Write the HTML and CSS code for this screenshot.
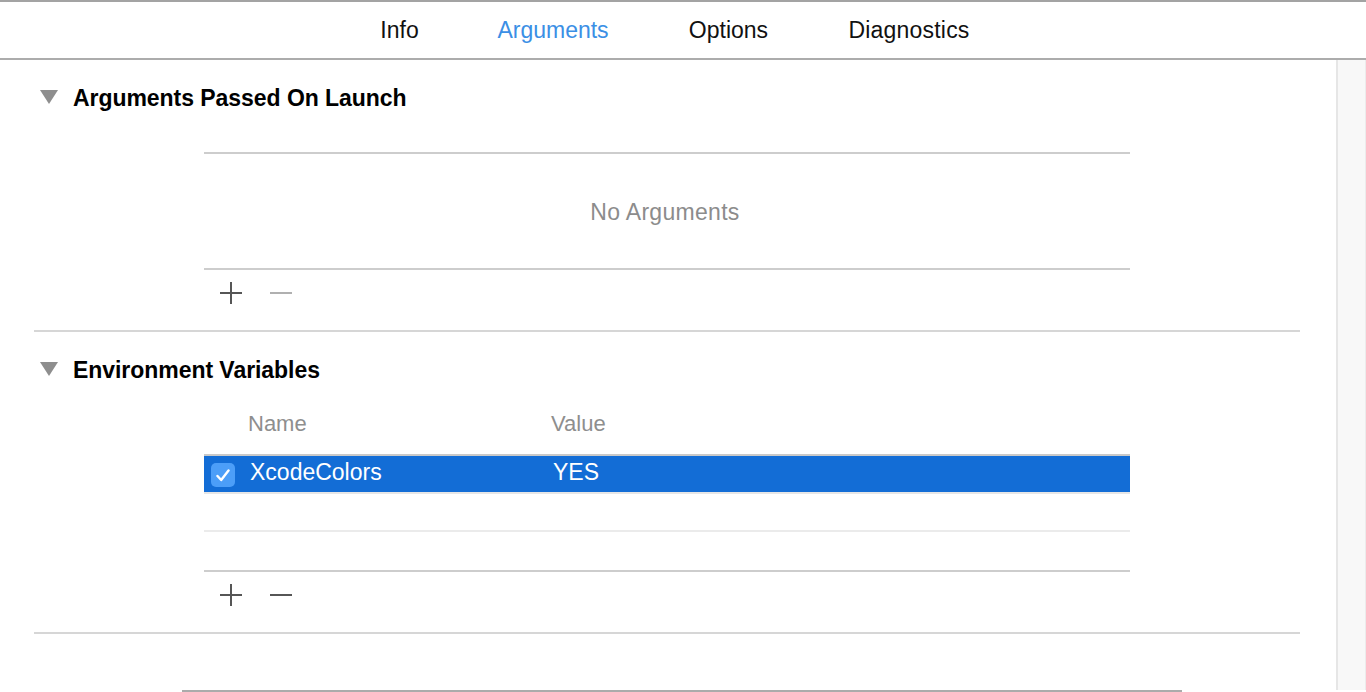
FILE: index.html
```html
<!DOCTYPE html>
<html lang="en">
<head>
<meta charset="utf-8">
<title>Scheme Editor - Arguments</title>
<link rel="stylesheet" href="styles.css">
</head>
<body>
<div class="window">
  <header class="tabbar">
    <nav class="tabs">
      <span class="tab tab-info">Info</span>
      <span class="tab tab-args active">Arguments</span>
      <span class="tab tab-options">Options</span>
      <span class="tab tab-diag">Diagnostics</span>
    </nav>
  </header>

  <div class="scroll-area">
    <main class="content">
      <section class="section">
        <div class="section-head">
          <svg class="disclosure" width="18" height="14" viewBox="0 0 18 14"><polygon points="0,0 18,0 9,14" fill="#8e8e8e"/></svg>
          <h2 class="section-title">Arguments Passed On Launch</h2>
        </div>
        <div class="table">
          <div class="empty-body">
            <span class="empty-text">No Arguments</span>
          </div>
          <div class="buttons">
            <svg class="btn" width="22" height="22" viewBox="0 0 22 22"><rect x="0" y="10" width="22" height="2" fill="#565656"/><rect x="10" y="0" width="2" height="22" fill="#565656"/></svg>
            <svg class="btn" width="22" height="22" viewBox="0 0 22 22"><rect x="0" y="10" width="22" height="2" fill="#b0b0b0"/></svg>
          </div>
        </div>
      </section>

      <section class="section">
        <div class="section-head">
          <svg class="disclosure" width="18" height="14" viewBox="0 0 18 14"><polygon points="0,0 18,0 9,14" fill="#8e8e8e"/></svg>
          <h2 class="section-title">Environment Variables</h2>
        </div>
        <div class="table env">
          <div class="col-head">
            <span class="cell-check"></span>
            <span class="cell-name">Name</span>
            <span class="cell-value">Value</span>
          </div>
          <div class="rows">
            <div class="row selected">
              <span class="cell-check">
                <span class="checkbox">
                  <svg width="14" height="13" viewBox="0 0 14 13"><path d="M1.5 7 L5.2 11 L12.5 1.5" fill="none" stroke="#fff" stroke-width="2.4" stroke-linecap="round" stroke-linejoin="round"/></svg>
                </span>
              </span>
              <span class="cell-name">XcodeColors</span>
              <span class="cell-value">YES</span>
            </div>
            <div class="row blank"></div>
            <div class="rows-fill"></div>
          </div>
          <div class="buttons">
            <svg class="btn" width="22" height="22" viewBox="0 0 22 22"><rect x="0" y="10" width="22" height="2" fill="#565656"/><rect x="10" y="0" width="2" height="22" fill="#565656"/></svg>
            <svg class="btn" width="22" height="22" viewBox="0 0 22 22"><rect x="0" y="10" width="22" height="2" fill="#565656"/></svg>
          </div>
        </div>
      </section>
    </main>
    <aside class="scrollbar"></aside>
  </div>

  <footer class="bottom">
    <div class="bottom-line"></div>
  </footer>
</div>
</body>
</html>
```

FILE: styles.css
```css
* {
  box-sizing: border-box;
}

html, body {
  margin: 0;
  padding: 0;
  background: #ffffff;
}

body {
  font-family: "Liberation Sans", Arial, "Helvetica Neue", sans-serif;
  color: #000;
  width: 1366px;
  height: 692px;
  overflow: hidden;
}

.window {
  display: flex;
  flex-direction: column;
  height: 692px;
}

/* ---------- tab bar ---------- */
.tabbar {
  height: 60px;
  border-top: 2px solid #a3a3a3;
  border-bottom: 2px solid #acacac;
  display: flex;
  align-items: center;
  flex: none;
}

.tabs {
  display: flex;
  align-items: center;
  gap: 78px;
  padding-left: 380px;
}

.tab {
  font-size: 23px;
  line-height: 28px;
  white-space: nowrap;
  text-align: center;
  color: #111;
  display: flex;
  justify-content: center;
}

.tab-info { width: 39px; }
.tab-args { width: 112px; }
.tab-options { width: 81px; margin-left: 1px; }
.tab-diag { width: 122px; margin-left: 1px; letter-spacing: 0.2px; }

.tab.active {
  color: #3b8fe5;
}

/* ---------- scroll area ---------- */
.scroll-area {
  display: flex;
  height: 630px;
  flex: none;
}

.content {
  width: 1336px;
  flex: none;
  padding-left: 34px;
}

.scrollbar {
  width: 30px;
  flex: none;
  background: #f8f8f8;
  border-left: 2px solid #e6e6e6;
  border-right: 1px solid #ececec;
}

/* ---------- sections ---------- */
.section {
  width: 1266px;
  border-bottom: 2px solid #d6d6d6;
}

.section-head {
  display: flex;
  align-items: center;
  height: 36px;
  margin-top: 20px;
}

.disclosure {
  margin-left: 6px;
  margin-top: -2px;
  flex: none;
}

.section-title {
  margin: 0 0 0 15px;
  font-size: 23px;
  font-weight: bold;
  line-height: 36px;
  letter-spacing: -0.05px;
}

.table {
  margin-left: 170px;
  width: 926px;
  margin-top: 36px;
}

.empty-body {
  border-top: 2px solid #cdcdcd;
  border-bottom: 2px solid #cdcdcd;
  height: 118px;
  display: flex;
  align-items: center;
  justify-content: center;
}

.empty-text {
  font-size: 23px;
  color: #8c8c8c;
  margin-top: 2px;
  margin-right: 4px;
  letter-spacing: 0.3px;
}

.buttons {
  height: 46px;
  margin-bottom: 14px;
  display: flex;
  align-items: center;
  gap: 28px;
  padding-left: 16px;
}

.btn {
  display: block;
  flex: none;
}

/* ---------- env table ---------- */
.table.env {
  margin-top: 18px;
}

.col-head {
  display: flex;
  height: 48px;
  font-size: 22px;
  line-height: 36px;
  color: #8e8e8e;
}

.cell-check {
  width: 44px;
  flex: none;
  display: flex;
  align-items: center;
  padding-left: 7px;
}

.cell-name {
  width: 303px;
  flex: none;
}

.cell-value {
  flex: 1;
}

.rows {
  border-top: 2px solid #c9c9c9;
  border-bottom: 2px solid #cdcdcd;
}

.row {
  display: flex;
  align-items: center;
  height: 38px;
  font-size: 23px;
  border-bottom: 2px solid #e8e8e8;
}

.row.selected {
  background: #136dd6;
  color: #fff;
  border-bottom-color: #e6e6e6;
  background-clip: padding-box;
}

.row.selected .cell-name {
  margin-top: -3px;
  padding-left: 2px;
}

.row.selected .cell-value {
  margin-top: -3px;
  padding-left: 2px;
}

.checkbox {
  width: 24px;
  height: 24px;
  border-radius: 5px;
  background: #4c9ef8;
  display: flex;
  align-items: center;
  justify-content: center;
  margin-top: 1px;
}

.checkbox svg {
  display: block;
  margin-top: 1px;
}

.row.blank {
  height: 38px;
  border-bottom-color: #ebebeb;
}

.rows-fill {
  height: 38px;
}

/* ---------- bottom ---------- */
.bottom {
  height: 2px;
  flex: none;
  padding-left: 182px;
}

.bottom-line {
  width: 1000px;
  height: 2px;
  background: #ababab;
}
```
